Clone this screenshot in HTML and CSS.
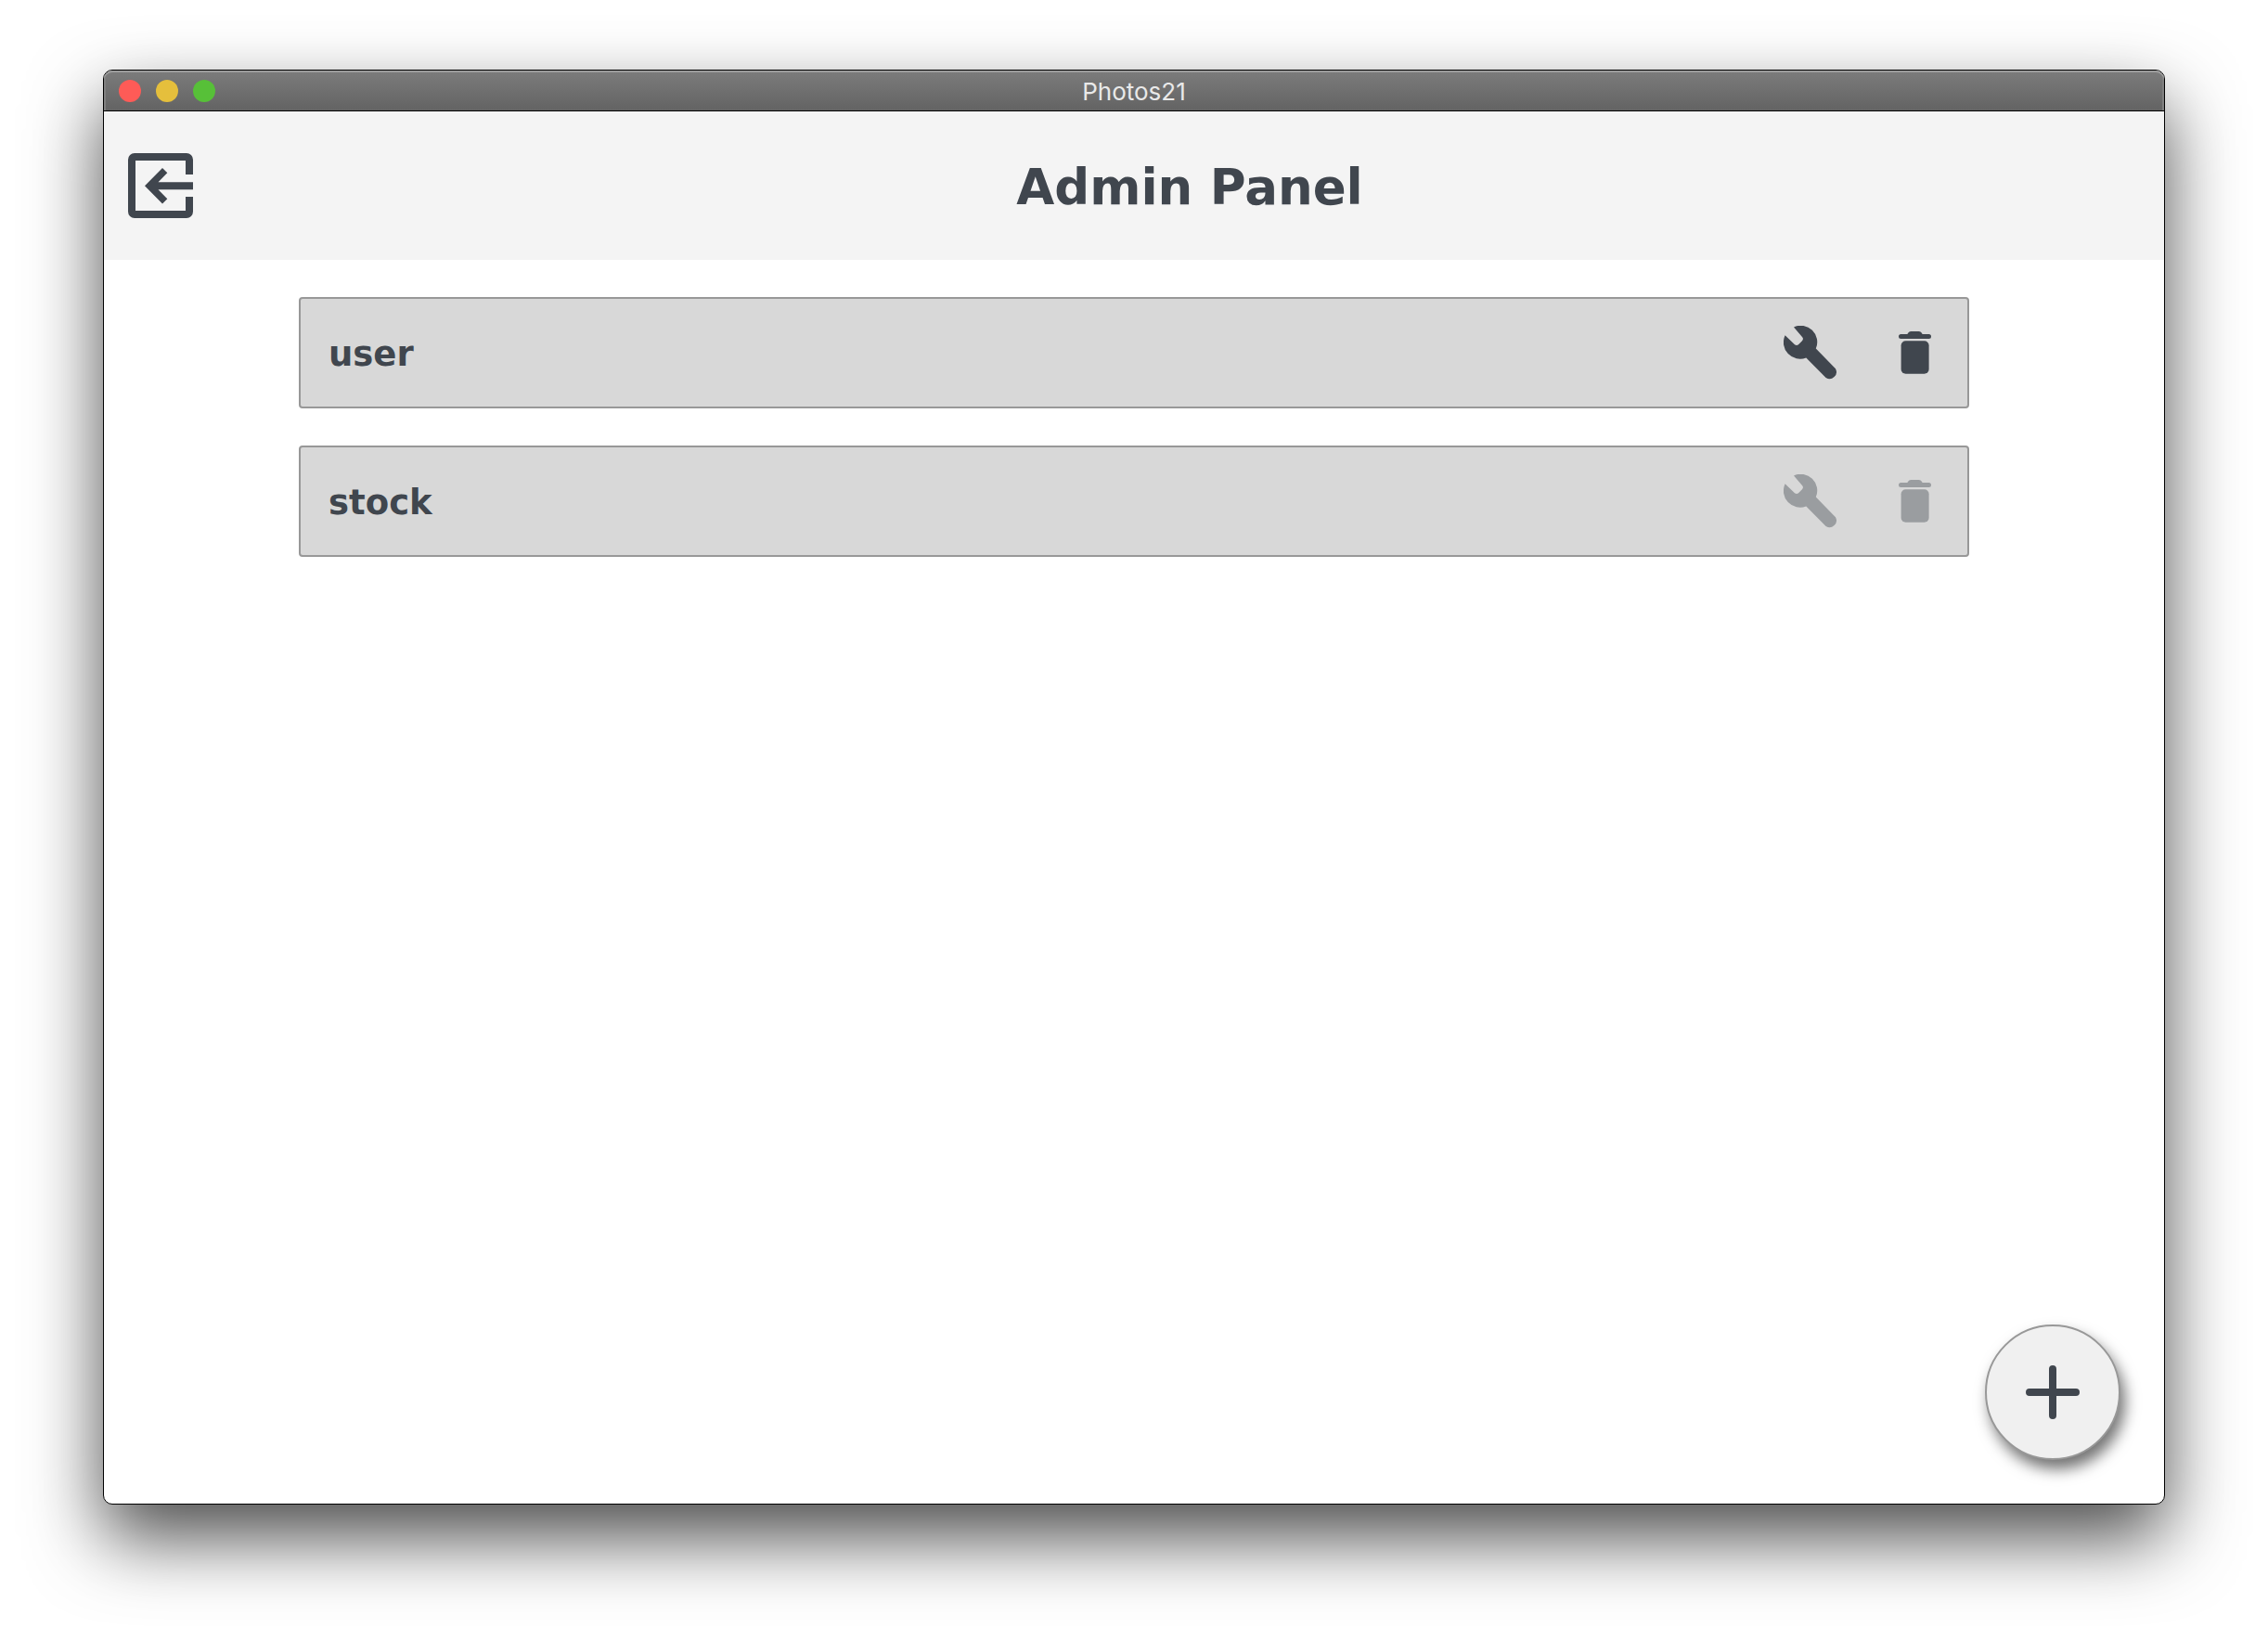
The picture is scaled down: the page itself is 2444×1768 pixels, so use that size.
FILE: index.html
```html
<!DOCTYPE html>
<html lang="en">
<head>
  <meta charset="utf-8">
  <meta name="viewport" content="width=device-width, initial-scale=1">
  <title>Photos21</title>
  <link rel="stylesheet" href="styles.css">
</head>
<body>
  <svg class="sprite" aria-hidden="true">
    <symbol id="wrench" viewBox="0 0 58 58">
      <path d="M11 1.4A17.8 17.8 0 0 1 34.8 24.6L56 46.2A7.4 7.4 0 0 1 45.6 56L24.3 34.4A17.8 17.8 0 0 1 1.6 10.3L12 20.2Q14 21.8 16 20.2L20 16.2Q21.8 14.2 20.2 12.2Z"/>
    </symbol>
    <symbol id="trash" viewBox="0 0 35 46">
      <path d="M2.5 3H9.3Q10.8 0 13 0H22Q24.2 0 25.7 3H32.5A2.5 2.5 0 0 1 32.5 8H2.5A2.5 2.5 0 0 1 2.5 3Z"/>
      <rect x="2.6" y="10.3" width="30" height="35.4" rx="5"/>
    </symbol>
  </svg>

  <div class="window">
    <div class="titlebar">
      <div class="lights">
        <button class="light light-close" type="button" aria-label="Close"></button>
        <button class="light light-minimize" type="button" aria-label="Minimize"></button>
        <button class="light light-zoom" type="button" aria-label="Zoom"></button>
      </div>
      <span class="window-title">Photos21</span>
    </div>

    <header class="header">
      <button class="icon-button logout" type="button" aria-label="Log out">
        <svg width="70" height="70" viewBox="0 0 70 70">
          <path d="M7 0H63A7 7 0 0 1 70 7V23H62V8H8V62H62V47H70V63A7 7 0 0 1 63 70H7A7 7 0 0 1 0 63V7A7 7 0 0 1 7 0Z"/>
          <path d="M18 35.3L37 16L42.3 21.3L32.5 31.3H70V39.3H32.5L42.3 49.3L37 54.6Z"/>
        </svg>
      </button>
      <h1 class="heading">Admin Panel</h1>
    </header>

    <main class="content">
      <ul class="users">
        <li class="user">
          <span class="user-name">user</span>
          <button class="icon-button" type="button" aria-label="Edit user"><svg width="58" height="58"><use href="#wrench"/></svg></button>
          <button class="icon-button" type="button" aria-label="Delete user"><svg width="35" height="46"><use href="#trash"/></svg></button>
        </li>
        <li class="user">
          <span class="user-name">stock</span>
          <button class="icon-button" type="button" aria-label="Edit stock" disabled><svg width="58" height="58"><use href="#wrench"/></svg></button>
          <button class="icon-button" type="button" aria-label="Delete stock" disabled><svg width="35" height="46"><use href="#trash"/></svg></button>
        </li>
      </ul>
      <button class="add" type="button" aria-label="Add user">
        <svg width="58" height="58" viewBox="0 0 58 58"><path d="M29 4V54M4 29H54"/></svg>
      </button>
    </main>
  </div>
</body>
</html>
```

FILE: styles.css
```css
* {
  box-sizing: border-box;
}

body {
  display: flex;
  min-height: 100vh;
  margin: 0;
  padding: 75px 111px 147px;
  background: #fff;
  color: #40464e;
  font-family: Verdana, "DejaVu Sans", sans-serif;
}

button {
  padding: 0;
  border: 0;
  background: none;
  color: inherit;
}

svg {
  display: block;
  fill: currentColor;
}

.sprite {
  position: absolute;
  width: 0;
  height: 0;
}

.window {
  display: flex;
  flex: 1;
  flex-direction: column;
  overflow: hidden;
  border: 1px solid #000;
  border-radius: 10px;
  background: #fff;
  box-shadow: 0 36px 80px rgba(0, 0, 0, 0.7);
}

.titlebar {
  display: grid;
  grid-template-columns: 1fr auto 1fr;
  align-items: center;
  height: 44px;
  padding: 0 16px;
  border-bottom: 1px solid #000;
  border-radius: 9px 9px 0 0;
  background: linear-gradient(#7c7c7c, #636363);
  box-shadow: inset 0 2px 0 #9c9c9c, inset 2px 0 0 #808080, inset -2px 0 0 #808080;
}

.lights {
  display: flex;
  gap: 16px;
}

.light {
  width: 24px;
  height: 24px;
  border-radius: 50%;
}

.light-close {
  background: #fe5b57;
}

.light-minimize {
  background: #e5bf3c;
}

.light-zoom {
  background: #57c038;
}

.window-title {
  padding-top: 2px;
  color: #e9e9e9;
  font-family: Inter, sans-serif;
  font-size: 26px;
  line-height: 40px;
}

.header {
  display: flex;
  align-items: center;
  height: 160px;
  background: #f4f4f4;
}

.logout {
  width: 120px;
  padding-left: 26px;
}

.heading {
  flex: 1;
  margin: 0;
  padding-top: 3px;
  font-size: 53px;
  line-height: 64px;
  text-align: center;
}

.content {
  position: relative;
  flex: 1;
  padding: 40px 210px;
}

.users {
  display: grid;
  gap: 40px;
  margin: 0;
  padding: 0;
  list-style: none;
}

.user {
  display: flex;
  gap: 66px;
  align-items: center;
  height: 120px;
  padding: 0 39px 0 30px;
  border: 2px solid #989898;
  border-radius: 4px;
  background: #d8d8d8;
}

.user-name {
  flex: 1;
  padding-top: 3px;
  font-size: 37px;
  font-weight: bold;
  line-height: 48px;
}

.icon-button:disabled {
  color: #9a9da0;
}

.add {
  position: absolute;
  right: 47px;
  bottom: 47px;
  display: grid;
  place-items: center;
  width: 146px;
  height: 146px;
  border: 2px solid #989898;
  border-radius: 50%;
  background: #f0f0f0;
  box-shadow: 5px 10px 16px rgba(0, 0, 0, 0.55);
}

.add svg {
  fill: none;
  stroke: currentColor;
  stroke-width: 8;
  stroke-linecap: round;
}
```
